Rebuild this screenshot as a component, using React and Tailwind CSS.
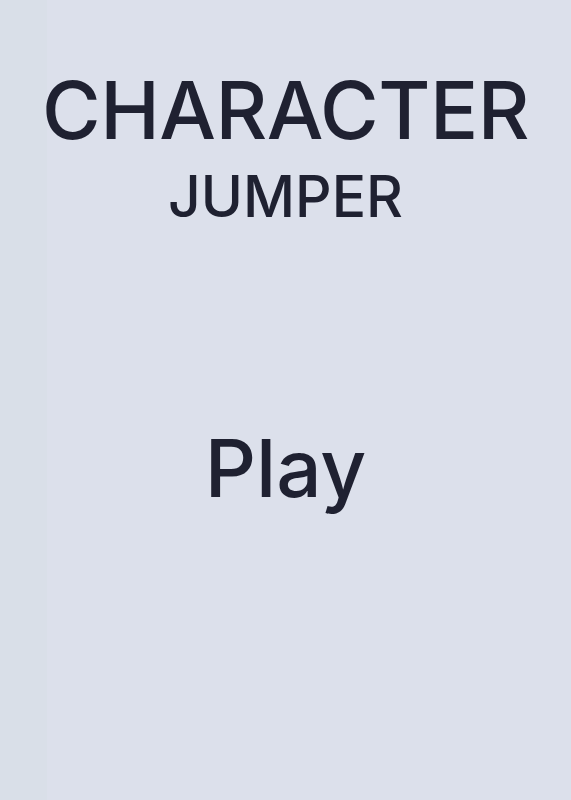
export default function App() {
  return (
    <div className="min-h-[800px] w-full bg-[linear-gradient(to_right,#d9dfe8_47px,#dce0eb_47px)] font-['Inter',sans-serif] text-[#1f2131]">
      <div className="flex flex-col items-center pt-[70px]">
        <h1 className="text-[80px] leading-none font-medium tracking-[-0.5px]">CHARACTER</h1>
        <h2 className="mt-[18px] text-[57px] leading-none font-medium">JUMPER</h2>
        <button className="mt-[203px] text-[80px] leading-none font-medium">Play</button>
      </div>
    </div>
  );
}
